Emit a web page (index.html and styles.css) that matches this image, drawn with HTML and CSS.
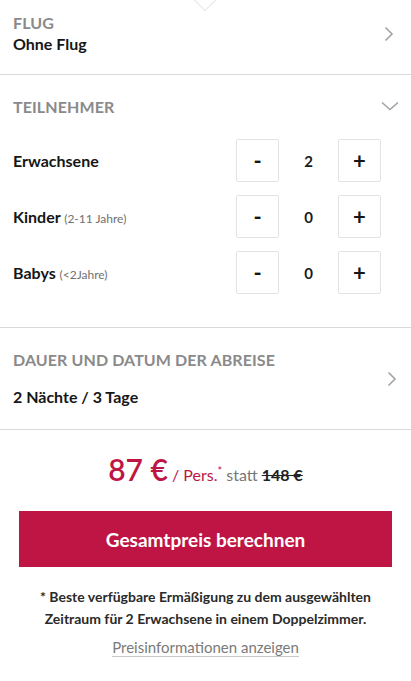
FILE: index.html
```html
<!DOCTYPE html>
<html lang="de">
<head>
<meta charset="utf-8">
<link rel="stylesheet" href="styles.css">
</head>
<body>
<div class="page">
  <span class="notch" aria-hidden="true"></span>
  <section class="sec sec-flug">
    <div class="sec-body">
      <div class="label">FLUG</div>
      <div class="value">Ohne Flug</div>
    </div>
    <svg class="chev" width="10" height="16" viewBox="0 0 10 16"><path d="M1.5 1.5 L8 8 L1.5 14.5" fill="none" stroke="#a3a3a3" stroke-width="1.6"/></svg>
  </section>

  <section class="sec sec-pax">
    <div class="pax-head">
      <div class="label">TEILNEHMER</div>
      <svg class="chev-down" width="18" height="10" viewBox="0 0 18 10"><path d="M1 1.5 L9 8.5 L17 1.5" fill="none" stroke="#a3a3a3" stroke-width="1.6"/></svg>
    </div>
    <div class="pax-row">
      <div class="pax-name">Erwachsene</div>
      <div class="counter"><button class="cbtn">-</button><span class="cnum">2</span><button class="cbtn">+</button></div>
    </div>
    <div class="pax-row">
      <div class="pax-name">Kinder <span class="pax-age">(2-11 Jahre)</span></div>
      <div class="counter"><button class="cbtn">-</button><span class="cnum">0</span><button class="cbtn">+</button></div>
    </div>
    <div class="pax-row">
      <div class="pax-name">Babys <span class="pax-age">(&lt;2Jahre)</span></div>
      <div class="counter"><button class="cbtn">-</button><span class="cnum">0</span><button class="cbtn">+</button></div>
    </div>
  </section>

  <section class="sec sec-dauer">
    <div class="sec-body">
      <div class="label">DAUER UND DATUM DER ABREISE</div>
      <div class="value value-dauer">2 Nächte / 3 Tage</div>
    </div>
    <svg class="chev" width="10" height="16" viewBox="0 0 10 16"><path d="M1.5 1.5 L8 8 L1.5 14.5" fill="none" stroke="#a3a3a3" stroke-width="1.6"/></svg>
  </section>

  <div class="price">
    <span class="amount">87 €</span><span class="pers"> / Pers.<sup>*</sup></span> <span class="statt">statt</span> <s class="old">148 €</s>
  </div>
  <div class="cta-wrap"><button class="cta">Gesamtpreis berechnen</button></div>
  <p class="note">* Beste verfügbare Ermäßigung zu dem ausgewählten Zeitraum für 2 Erwachsene in einem Doppelzimmer.</p>
  <div class="more"><a class="more-link" href="#">Preisinformationen anzeigen</a></div>
</div>
</body>
</html>
```

FILE: styles.css
```css
* { box-sizing: border-box; }
html, body { margin: 0; padding: 0; background: #fff; }
body {
  font-family: Lato, "Open Sans", sans-serif;
  color: #1c1c1c;
  width: 411px;
}
.page { position: relative; }
.notch {
  position: absolute;
  left: 197px;
  top: -8px;
  width: 16px;
  height: 16px;
  border-right: 1.5px solid #e6e6e6;
  border-bottom: 1.5px solid #e6e6e6;
  transform: rotate(45deg);
}
.sec {
  border-bottom: 1px solid #d9d9d9;
}
.sec-flug {
  display: flex;
  align-items: center;
  justify-content: space-between;
  padding: 14px 17px 20px 13px;
  height: 75px;
}
.label {
  font-size: 16px;
  font-weight: 700;
  color: #8a8a8a;
  line-height: 20px;
  letter-spacing: 0.1px;
}
.value {
  font-size: 16px;
  font-weight: 700;
  line-height: 22px;
  color: #161616;
}
.chev { flex: none; }

.sec-pax {
  padding: 22px 12px 33px 13px;
}
.pax-head {
  display: flex;
  justify-content: space-between;
  align-items: center;
  margin-bottom: 22px;
}
.chev-down { margin-top: -2px; }
.pax-row {
  display: flex;
  align-items: center;
  justify-content: space-between;
  padding-right: 18px;
  margin-bottom: 13px;
}
.pax-row:last-child { margin-bottom: 0; }
.pax-name {
  font-size: 16px;
  font-weight: 700;
  color: #161616;
}
.pax-age {
  font-size: 12px;
  font-weight: 400;
  color: #707070;
}
.counter {
  display: flex;
  align-items: center;
}
.cbtn {
  width: 43px;
  height: 43px;
  border: 1px solid #e3e3e3;
  border-radius: 2px;
  background: #fff;
  font-family: inherit;
  font-size: 22px;
  font-weight: 700;
  color: #161616;
  padding: 0;
  line-height: 1;
}
.cnum {
  width: 59px;
  text-align: center;
  font-size: 15px;
  font-weight: 700;
}

.sec-dauer {
  display: flex;
  align-items: center;
  justify-content: space-between;
  padding: 22px 14px 21px 13px;
}
.value-dauer { margin-top: 16px; }

.price {
  text-align: center;
  padding-top: 19px;
  font-size: 16px;
  line-height: 40px;
}
.amount {
  font-size: 30px;
  font-weight: 600;
  color: #be1544;
}
.pers { color: #be1544; }
.pers sup { font-size: 11px; vertical-align: 6px; }
.statt { color: #777; }
.old { font-weight: 700; color: #222; }

.cta-wrap { padding: 16px 19px 0 19px; }
.cta {
  display: block;
  width: 100%;
  height: 56px;
  border: none;
  background: #be1544;
  color: #fff;
  font-family: inherit;
  font-size: 19px;
  font-weight: 700;
}
.note {
  margin: 19px 0 0;
  padding: 0 30px;
  text-align: center;
  font-size: 14px;
  font-weight: 700;
  line-height: 22px;
  color: #2a2a2a;
}
.more {
  text-align: center;
  margin-top: 7px;
}
.more-link {
  display: inline-block;
  font-size: 15px;
  line-height: 18px;
  color: #7a7a7a;
  text-decoration: none;
  border-bottom: 1px solid #c8c8c8;
}
```
